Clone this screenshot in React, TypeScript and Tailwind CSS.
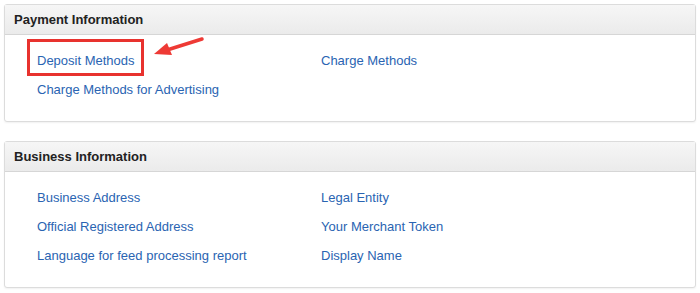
import React from 'react';

const Panel = ({ title, rows, children }: { title: string; rows: [string, string?][]; children?: React.ReactNode }) => (
  <div className="relative mx-[4px] rounded-[3px] border border-[#dcdcdc] bg-white shadow-[0_1px_2px_rgba(0,0,0,0.06)]">
    <div className="flex h-[30px] items-center border-b border-[#d6d6d6] bg-gradient-to-b from-[#f6f6f6] to-[#ebebeb] px-[9px] text-[13px] font-bold text-[#222]">
      {title}
    </div>
    <div className="pt-[11px] pb-[17px] pl-[32px]">
      {rows.map((row, i) => (
        <div key={i} className="grid h-[29px] grid-cols-[284px_1fr] items-center text-[13px] text-[#2a64b2]">
          <a className="cursor-pointer hover:underline">{row[0]}</a>
          {row[1] && <a className="cursor-pointer hover:underline">{row[1]}</a>}
        </div>
      ))}
    </div>
    {children}
  </div>
);

const App = () => {
  return (
    <div className="h-[293px] w-[700px] bg-white pt-[4px] font-['Liberation_Sans',Arial,sans-serif]">
      <Panel
        title="Payment Information"
        rows={[
          ['Deposit Methods', 'Charge Methods'],
          ['Charge Methods for Advertising'],
        ]}
      >
        {/* annotation box + arrow */}
        <div className="pointer-events-none absolute left-[22px] top-[34px] h-[37px] w-[117px] border-[3px] border-[#e8322e]" />
        <svg className="pointer-events-none absolute left-[140px] top-[26px]" width="64" height="28" viewBox="0 0 64 28">
          <path d="M57 8 L22 19" stroke="#ee3a35" strokeWidth="3.5" strokeLinecap="round" />
          <path d="M9 23 L22 12 L27 24 Z" fill="#ee3a35" />
        </svg>
      </Panel>
      <div className="h-[19px]" />
      <Panel
        title="Business Information"
        rows={[
          ['Business Address', 'Legal Entity'],
          ['Official Registered Address', 'Your Merchant Token'],
          ['Language for feed processing report', 'Display Name'],
        ]}
      />
    </div>
  );
};

export default App;
